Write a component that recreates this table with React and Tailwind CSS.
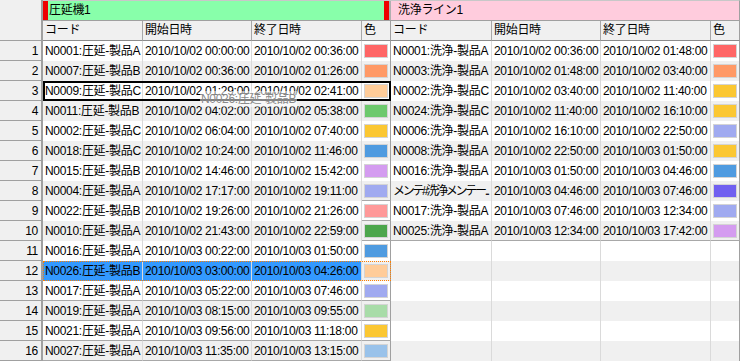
const LEFT = [
  ['N0001:圧延-製品A', '2010/10/02 00:00:00', '2010/10/02 00:36:00', '#ff6666'],
  ['N0007:圧延-製品B', '2010/10/02 00:36:00', '2010/10/02 01:26:00', '#ff9966'],
  ['N0009:圧延-製品C', '2010/10/02 01:29:00', '2010/10/02 02:41:00', '#ffcc99'],
  ['N0011:圧延-製品B', '2010/10/02 04:02:00', '2010/10/02 05:38:00', '#6dc96d'],
  ['N0002:圧延-製品C', '2010/10/02 06:04:00', '2010/10/02 07:40:00', '#fbc732'],
  ['N0018:圧延-製品C', '2010/10/02 10:24:00', '2010/10/02 11:46:00', '#4f9be0'],
  ['N0015:圧延-製品B', '2010/10/02 14:46:00', '2010/10/02 15:42:00', '#d49cf0'],
  ['N0004:圧延-製品A', '2010/10/02 17:17:00', '2010/10/02 19:11:00', '#a0aaf0'],
  ['N0022:圧延-製品B', '2010/10/02 19:26:00', '2010/10/02 21:26:00', '#ff9999'],
  ['N0010:圧延-製品A', '2010/10/02 21:43:00', '2010/10/02 22:59:00', '#4ca64c'],
  ['N0016:圧延-製品A', '2010/10/03 00:22:00', '2010/10/03 01:50:00', '#4f9be0'],
  ['N0026:圧延-製品B', '2010/10/03 03:00:00', '2010/10/03 04:26:00', '#ffcc99'],
  ['N0017:圧延-製品A', '2010/10/03 05:22:00', '2010/10/03 07:46:00', '#a0aaf0'],
  ['N0019:圧延-製品A', '2010/10/03 08:15:00', '2010/10/03 09:55:00', '#a8dca8'],
  ['N0021:圧延-製品A', '2010/10/03 09:56:00', '2010/10/03 11:18:00', '#fbc732'],
  ['N0027:圧延-製品A', '2010/10/03 11:35:00', '2010/10/03 13:15:00', '#99c2ea'],
];

const RIGHT = [
  ['N0001:洗浄-製品A', '2010/10/02 00:36:00', '2010/10/02 01:48:00', '#ff6666'],
  ['N0003:洗浄-製品A', '2010/10/02 01:48:00', '2010/10/02 03:40:00', '#ff9966'],
  ['N0002:洗浄-製品C', '2010/10/02 03:40:00', '2010/10/02 11:40:00', '#fbc732'],
  ['N0024:洗浄-製品C', '2010/10/02 11:40:00', '2010/10/02 16:10:00', '#fbc732'],
  ['N0006:洗浄-製品A', '2010/10/02 16:10:00', '2010/10/02 22:50:00', '#a0aaf0'],
  ['N0008:洗浄-製品A', '2010/10/02 22:50:00', '2010/10/03 01:50:00', '#fbc732'],
  ['N0016:洗浄-製品A', '2010/10/03 01:50:00', '2010/10/03 04:46:00', '#4f9be0'],
  ['メンテ#洗浄メンテー...', '2010/10/03 04:46:00', '2010/10/03 07:46:00', '#7060f0'],
  ['N0017:洗浄-製品A', '2010/10/03 07:46:00', '2010/10/03 12:34:00', '#a0aaf0'],
  ['N0025:洗浄-製品A', '2010/10/03 12:34:00', '2010/10/03 17:42:00', '#d49cf0'],
];

// widths: code, start, end, color
const LW = ['w-[100px]', 'w-[109px]', 'w-[110px]', 'w-[29px]'];
const RW = ['w-[101px]', 'w-[109px]', 'w-[110px]', 'w-[29px]'];

function Swatch({ color }) {
  return <div className="h-[14px] w-[24px] border border-[#d4d4d4]" style={{ backgroundColor: color }} />;
}

function Cells({ row, widths, selected, lined, colorLined }) {
  const sel = selected ? 'bg-[#3399ff]' : '';
  const line = lined ? 'border-b border-b-[#a8a8a8]' : '';
  const cline = lined || colorLined ? 'border-b border-b-[#a8a8a8]' : '';
  return (
    <>
      {[0, 1, 2].map((c) => {
        const kana = row && c === 0 && row[0].startsWith('メンテ');
        return (
          <div
            key={c}
            className={`${widths[c]} ${sel} ${line} ${kana ? 'tracking-[-2.3px]' : ''} h-[20px] shrink-0 overflow-hidden whitespace-nowrap border-r border-[#dadada] pl-[2px] leading-[20px]`}
          >
            {row ? row[c] : ''}
          </div>
        );
      })}
      <div className={`${widths[3]} ${cline} flex h-[20px] shrink-0 items-center justify-center border-r border-r-[#a0a0a0]`}>
        {row && <Swatch color={row[3]} />}
      </div>
    </>
  );
}

function ColHead({ w, label, last }) {
  return (
    <div className={`${w} h-[20px] shrink-0 border-b border-b-[#8c8c8c] border-r ${last ? 'border-r-[#a0a0a0]' : 'border-r-[#a8a8a8]'} bg-[#f0f0f0] pl-[2px] leading-[19px]`}>
      {label}
    </div>
  );
}

const LEFT_LINES = new Set([13, 14, 15, 16]);
const COLOR_LINES = new Set([8, 9, 10]);

export default function App() {
  return (
    <div className="relative h-[363px] w-[742px] overflow-hidden bg-white font-['Liberation_Sans','Noto_Sans_CJK_JP',sans-serif] text-[12px] tracking-[-0.3px] text-black">
      <div className="flex">
        <div className="h-[41px] w-[43px] shrink-0 border-b border-r-2 border-[#a0a0a0] bg-[#f0f0f0]" />
        <div className="flex w-[348px] shrink-0 flex-col">
          <div className="flex h-[21px] border-b border-t border-b-[#a0a0a0] border-t-[#c8c8c8]">
            <div className="w-[5px] bg-[#ee0000]" />
            <div className="flex-1 bg-[#88ffaa] pl-[1px] leading-[19px]">圧延機1</div>
            <div className="w-[5px] bg-[#ee0000]" />
            <div className="w-[2px] bg-[#b0b0b0]" />
          </div>
          <div className="flex">
            <ColHead w={LW[0]} label="コード" />
            <ColHead w={LW[1]} label="開始日時" />
            <ColHead w={LW[2]} label="終了日時" />
            <ColHead w={LW[3]} label="色" last />
          </div>
        </div>
        <div className="flex w-[349px] shrink-0 flex-col">
          <div className="h-[21px] border-b border-r border-t border-b-[#a0a0a0] border-r-[#a0a0a0] border-t-[#c8c8c8] bg-[#ffccdd] pl-[7px] leading-[19px]">
            洗浄ライン1
          </div>
          <div className="flex">
            <ColHead w={RW[0]} label="コード" />
            <ColHead w={RW[1]} label="開始日時" />
            <ColHead w={RW[2]} label="終了日時" />
            <ColHead w={RW[3]} label="色" last />
          </div>
        </div>
      </div>

      {LEFT.map((row, i) => {
        const n = i + 1;
        const alt = n % 2 === 0 ? 'bg-[#f0f0f0]' : 'bg-white';
        let outline = '';
        if (n === 3) outline = 'outline-2 outline-black -outline-offset-2';
        if (n === 12) outline = 'outline-1 outline-dotted outline-[#ff8000] -outline-offset-1';
        return (
          <div key={n} className="flex">
            <div className="h-[20px] w-[43px] shrink-0 border-b border-r-2 border-[#a0a0a0] bg-[#f0f0f0] pr-[3px] text-right leading-[20px]">
              {n}
            </div>
            <div className={`flex w-[348px] shrink-0 ${alt} ${outline}`}>
              <Cells row={row} widths={LW} selected={n === 12} lined={LEFT_LINES.has(n)} colorLined={COLOR_LINES.has(n)} />
            </div>
            <div className={`flex w-[349px] shrink-0 ${alt}`}>
              <Cells row={RIGHT[i]} widths={RW} lined={n === 10} />
            </div>
          </div>
        );
      })}

      <div className="pointer-events-none absolute left-[200px] top-[91px] h-[16px] w-[97px] bg-white/50 pl-[1px] leading-[16px] text-[#8a8a8a]">
        N0026:圧延-製品B
      </div>
    </div>
  );
}
